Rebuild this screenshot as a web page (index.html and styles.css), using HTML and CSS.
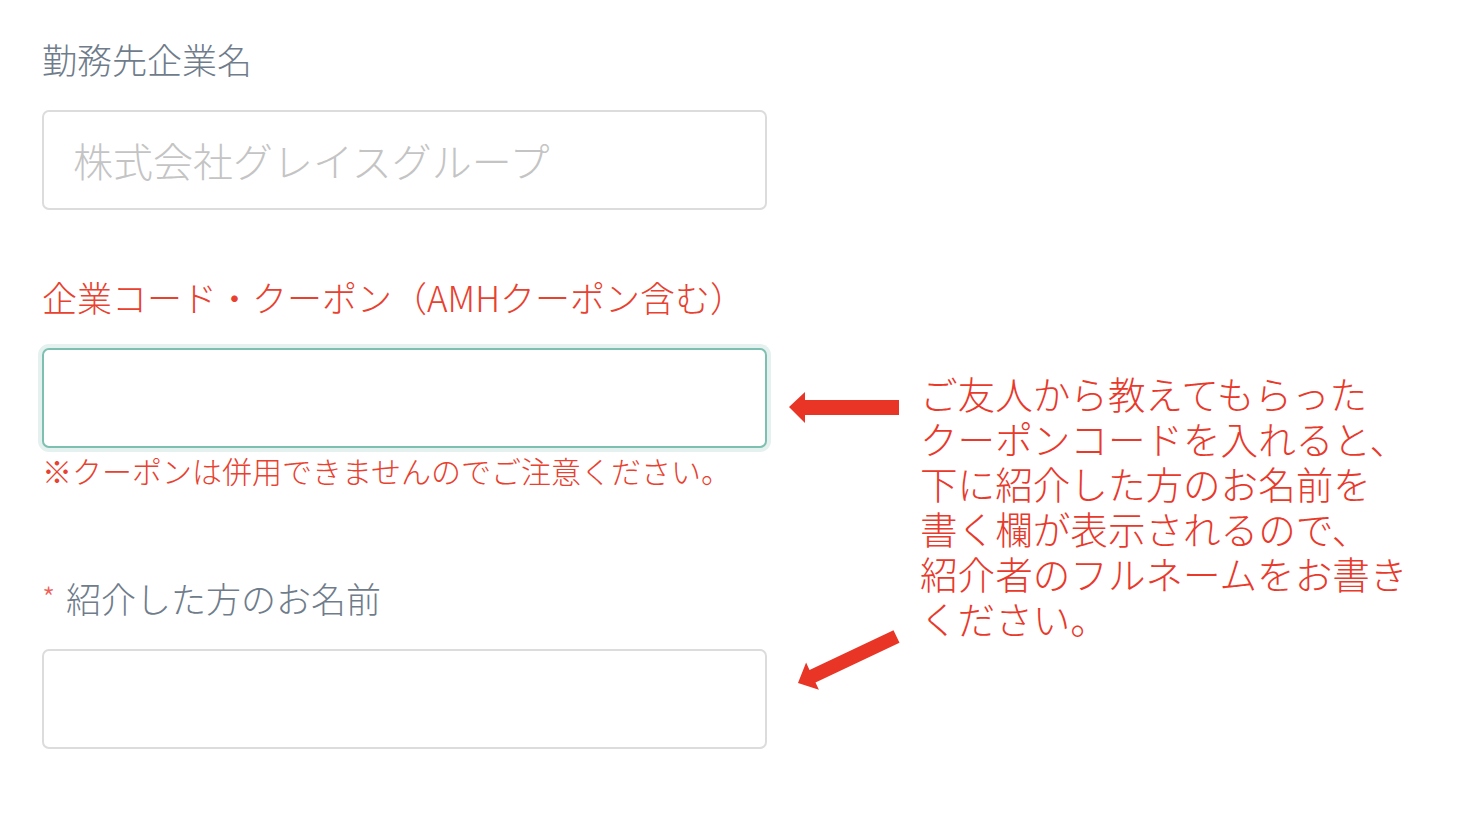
FILE: index.html
```html
<!DOCTYPE html>
<html lang="ja">
<head>
    <meta charset="UTF-8">
    <meta name="viewport" content="width=device-width, initial-scale=1.0">
    <title>会員登録 - 企業情報</title>
    <link rel="stylesheet" href="styles.css">
</head>
<body>
    <div class="page">
        <form class="form">
            <div class="field">
                <label class="label" for="company">勤務先企業名</label>
                <input class="input" id="company" type="text" placeholder="株式会社グレイスグループ">
            </div>
            <div class="field">
                <label class="label label-red" for="coupon">企業コード・クーポン（AMHクーポン含む）</label>
                <input class="input input-focus" id="coupon" type="text">
                <p class="note">※クーポンは併用できませんのでご注意ください。</p>
            </div>
            <div class="field field-referrer">
                <label class="label" for="referrer"><span class="required">*</span>紹介した方のお名前</label>
                <input class="input" id="referrer" type="text">
            </div>
        </form>
        <div class="aside">
            <!-- 注釈の矢印 -->
            <svg class="arrows" width="140" height="816" viewBox="0 0 140 816">
                <polygon points="9,407 25,392 25,400 119,400 119,415 25,415 25,423" fill="#e83526"/>
                <polygon points="18,683 26.1,662.6 29.5,669.9 113.5,630.2 119.5,642.8 35.5,682.5 38.9,689.8" fill="#e83526"/>
            </svg>
            <p class="memo">ご友人から教えてもらった<br>クーポンコードを入れると、<br>下に紹介した方のお名前を<br>書く欄が表示されるので、<br>紹介者のフルネームをお書き<br>ください。</p>
        </div>
    </div>
</body>
</html>
```

FILE: styles.css
```css
body {
    margin: 0;
    background-color: #fff;
    font-family: "Noto Sans CJK JP", "Noto Sans", sans-serif;
}
.page {
    display: flex;
    padding-left: 42px;
}
.form {
    width: 725px;
    padding-top: 34px;
}
.field {
    display: flex;
    flex-direction: column;
    margin-bottom: 62px;
}
.field-referrer {
    margin-top: 86px;
}
.label {
    display: block;
    font-size: 35px;
    font-weight: 300;
    line-height: 50px;
    color: #6f7c8b;
    margin-bottom: 26px;
    white-space: nowrap;
}
.label-red {
    color: #e8412f;
}
.required {
    display: inline-block;
    width: 24px;
    font-size: 30px;
    line-height: 28px;
    color: #f0605a;
    vertical-align: 3px;
}
.input {
    box-sizing: border-box;
    width: 725px;
    height: 100px;
    margin: 0;
    padding: 0 29px;
    border: 2px solid #dcdcdc;
    border-radius: 7px;
    background-color: #fff;
    font-family: inherit;
    font-size: 40px;
    font-weight: 300;
    color: #333;
    outline: none;
}
.input::placeholder {
    color: #c4c4c4;
}
.input-focus {
    border-color: #7dc0b1;
    box-shadow: 0 0 0 4px #e4f1ee;
}
.note {
    margin: 5px 0 0;
    font-size: 30px;
    font-weight: 300;
    line-height: 34px;
    color: #e8412f;
    white-space: nowrap;
}
.aside {
    position: relative;
    margin-left: 153px;
    padding-top: 370px;
}
.arrows {
    position: absolute;
    top: 0;
    left: -140px;
}
.memo {
    margin: 0;
    font-size: 37.6px;
    font-weight: 300;
    line-height: 45px;
    color: #e8392b;
    white-space: nowrap;
}
```
